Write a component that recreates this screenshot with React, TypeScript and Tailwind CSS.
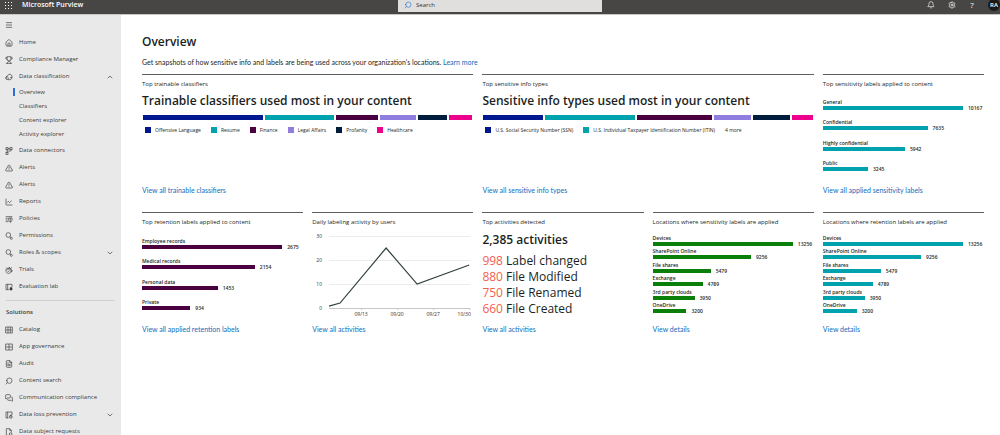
import type { ReactNode } from "react";
import {
  Bell,
  ChartLine,
  ChevronDown,
  ChevronUp,
  FileText,
  House,
  Menu,
  MessagesSquare,
  Search,
  Settings,
  TriangleAlert,
  Trophy,
} from "lucide-react";

const ICON = "h-2 w-2 shrink-0";

function Glyph({ children }: { children: ReactNode }) {
  return (
    <svg
      viewBox="0 0 24 24"
      className={ICON}
      fill="none"
      stroke="currentColor"
      strokeWidth="2"
      aria-hidden="true"
    >
      {children}
    </svg>
  );
}

const ClassificationIcon = () => (
  <Glyph>
    <path d="M3 17V12L12 4h5l4 5v6l-4 5H8" />
    <path d="M3 13c3-3 7-1 7 3s-5 5-7 2z" />
    <path d="M15 14h6" />
  </Glyph>
);

const ConnectorsIcon = () => (
  <Glyph>
    <rect x="3" y="2" width="6" height="6" />
    <rect x="15" y="2" width="6" height="6" />
    <rect x="3" y="16" width="6" height="6" />
    <path d="M6 8v8M9 5h6M18 8v4H6" />
  </Glyph>
);

const PoliciesIcon = () => (
  <Glyph>
    <path d="M2 5h20M2 10h6M2 15h6M2 20h8" />
    <path d="M11 9h10v6c0 3-2 5-5 7-3-2-5-4-5-7zM16 9v12" />
  </Glyph>
);

const PermissionsIcon = () => (
  <Glyph>
    <circle cx="10" cy="9" r="7" />
    <path d="M14 14l3 3" />
    <circle cx="19" cy="19" r="3" />
  </Glyph>
);

const TrialsIcon = () => (
  <Glyph>
    <path d="M3 9h15v7c0 4-3 6-7 6s-8-2-8-6z" />
    <path d="M5 5l5 4 3-6 2 6 6-5M18 12h3v5h-4M7 14l3 3 4-4" />
  </Glyph>
);

const LabIcon = () => (
  <Glyph>
    <path d="M12 20H3V4h18v8M8 4v16" />
    <path d="M15 14h6v7h-6z" fill="currentColor" />
  </Glyph>
);

const GridIcon = () => (
  <Glyph>
    <path d="M2 3h20v18H2zM9 3v18M16 3v18M2 12h20" />
  </Glyph>
);

const AppsIcon = () => (
  <Glyph>
    <path d="M2 3h20v18H2zM12 3v18M2 12h20" />
  </Glyph>
);

const LossIcon = () => (
  <Glyph>
    <path d="M10 21H3V3h18v9M8 3v18" />
    <path d="M14 15h7v6h-7zM16 15v-3h3v3" />
  </Glyph>
);

const RequestIcon = () => (
  <Glyph>
    <path d="M11 22H4V2h10l5 5v6M14 2v5h5" />
    <circle cx="17" cy="18" r="4" />
  </Glyph>
);

type NavEntry = { label: string; icon: ReactNode; chevron?: "up" | "down" };

const NAV_TOP: NavEntry[] = [
  { label: "Home", icon: <House className={ICON} /> },
  { label: "Compliance Manager", icon: <Trophy className={ICON} /> },
  { label: "Data classification", icon: <ClassificationIcon />, chevron: "up" },
];

const NAV_SUB = ["Overview", "Classifiers", "Content explorer", "Activity explorer"];

const NAV_MAIN: NavEntry[] = [
  { label: "Data connectors", icon: <ConnectorsIcon /> },
  { label: "Alerts", icon: <TriangleAlert className={ICON} /> },
  { label: "Alerts", icon: <TriangleAlert className={ICON} /> },
  { label: "Reports", icon: <ChartLine className={ICON} /> },
  { label: "Policies", icon: <PoliciesIcon /> },
  { label: "Permissions", icon: <PermissionsIcon /> },
  { label: "Roles & scopes", icon: <PermissionsIcon />, chevron: "down" },
  { label: "Trials", icon: <TrialsIcon /> },
  { label: "Evaluation lab", icon: <LabIcon /> },
];

const NAV_SOLUTIONS: NavEntry[] = [
  { label: "Catalog", icon: <GridIcon /> },
  { label: "App governance", icon: <AppsIcon /> },
  { label: "Audit", icon: <FileText className={ICON} /> },
  { label: "Content search", icon: <Search className={`${ICON} -scale-x-100`} /> },
  { label: "Communication compliance", icon: <MessagesSquare className={ICON} /> },
  { label: "Data loss prevention", icon: <LossIcon />, chevron: "down" },
  { label: "Data subject requests", icon: <RequestIcon /> },
];

function NavList({ items }: { items: NavEntry[] }) {
  const row = "flex h-[17px] w-full items-center gap-1.5 pr-[7px] pl-[5px] text-left";
  return (
    <ul>
      {items.map((item, i) => (
        <li key={i}>
          {item.chevron ? (
            <button type="button" aria-expanded={item.chevron === "up"} className={row}>
              {item.icon}
              <span className="flex-1">{item.label}</span>
              {item.chevron === "up" ? (
                <ChevronUp className={ICON} />
              ) : (
                <ChevronDown className={ICON} />
              )}
            </button>
          ) : (
            <a href="#" className={row}>
              {item.icon}
              <span>{item.label}</span>
            </a>
          )}
        </li>
      ))}
    </ul>
  );
}

function Sidebar() {
  return (
    <nav
      aria-label="Main"
      className="w-[121px] shrink-0 overflow-hidden bg-[#e9e9e9] text-[6px] whitespace-nowrap text-[#3b3a39]"
    >
      <button type="button" aria-label="Toggle navigation" className="flex h-[19px] items-center pl-[5px]">
        <Menu className={ICON} />
      </button>
      <NavList items={NAV_TOP} />
      <ul>
        {NAV_SUB.map((label, i) => (
          <li key={label}>
            <a
              href="#"
              aria-current={i === 0 ? "page" : undefined}
              className="flex h-3.5 items-center pl-[13px]"
            >
              <span className={i === 0 ? "h-2 w-0.5 bg-[#2a6fd6]" : "h-2 w-0.5"} />
              <span className="pl-1">{label}</span>
            </a>
          </li>
        ))}
      </ul>
      <div className="pt-px">
        <NavList items={NAV_MAIN} />
      </div>
      <hr className="mx-[6px] mt-[5px] border-[#cfcfcf]" />
      <h2 className="mt-[6px] mb-1 pl-[6px] leading-[10px] font-semibold">Solutions</h2>
      <NavList items={NAV_SOLUTIONS} />
    </nav>
  );
}

function Header() {
  return (
    <header className="flex h-[15px] shrink-0 items-start justify-between border-b border-[#c8c6c4] bg-[#484644] text-white">
      <div className="flex h-[10px] flex-1 items-center">
        <button type="button" aria-label="App launcher" className="pl-1">
          <svg viewBox="0 0 9 9" className="h-[9px] w-[9px]" fill="currentColor" aria-hidden="true">
            {[1, 4, 7].map((y) =>
              [1, 4, 7].map((x) => <rect key={`${x}-${y}`} x={x} y={y} width="1" height="1" />),
            )}
          </svg>
        </button>
        <span className="pl-[9px] text-[7px] font-semibold">Microsoft Purview</span>
      </div>
      <label className="flex h-3 w-[204px] items-center gap-1 bg-[#e1dfdd] pb-0.5 pl-1.5">
        <Search className="h-2 w-2 -scale-x-100 text-[#2b7cd3]" />
        <input
          type="search"
          aria-label="Search"
          placeholder="Search"
          className="h-2 min-w-0 flex-1 bg-transparent text-[6px] text-[#323130] outline-none placeholder:text-[#323130]"
        />
      </label>
      <div className="flex h-[10px] flex-1 items-center justify-end gap-[13px]">
        <button type="button" aria-label="Notifications">
          <Bell className="h-2 w-2" />
        </button>
        <button type="button" aria-label="Settings">
          <Settings className="h-2 w-2" />
        </button>
        <button type="button" aria-label="Help" className="w-1.5 text-[8px] leading-[10px]">
          ?
        </button>
        <button
          type="button"
          aria-label="Account"
          className="h-3 w-3 shrink-0 rounded-full bg-[#1b1a19] text-[6px] leading-3 font-semibold"
        >
          RA
        </button>
      </div>
    </header>
  );
}

type CardProps = { label: string; link: string; wide?: boolean; children: ReactNode };

function Card({ label, link, wide, children }: CardProps) {
  return (
    <section
      className={`flex min-w-0 flex-col border-t border-[#605e5c] pt-1 ${wide ? "col-span-2" : ""}`}
    >
      <h3 className="text-[6px] leading-[10px] whitespace-nowrap">{label}</h3>
      {children}
      <a
        href="#"
        className="mt-auto self-start font-['Lato','Open_Sans',sans-serif] text-[7px] leading-[10px] text-[#0f6cbd]"
      >
        {link}
      </a>
    </section>
  );
}

const HEADING = "text-[12px] leading-[14px] font-semibold";

type Segment = { color: string; size: number };

function StackedBar({ segments }: { segments: Segment[] }) {
  return (
    <div className="mt-[7px] flex gap-0.5 px-px">
      {segments.map((s, i) => (
        <div key={i} className={`h-[5px] basis-0 ${s.color}`} style={{ flexGrow: s.size }} />
      ))}
    </div>
  );
}

const COLORS = [
  "bg-[#00188f]",
  "bg-[#00a2ad]",
  "bg-[#4b003f]",
  "bg-[#8f7ee0]",
  "bg-[#001d3d]",
  "bg-[#ec008c]",
];

const CLASSIFIERS = [120, 69, 42, 37, 29, 23].map((size, i) => ({ size, color: COLORS[i] }));
const INFO_TYPES = [60, 90, 75, 37, 37, 21].map((size, i) => ({ size, color: COLORS[i] }));

function Legend({ labels, more }: { labels: string[]; more?: string }) {
  return (
    <ul className="mt-1.5 flex gap-2.5 pl-[3px] text-[5px] leading-2 whitespace-nowrap">
      {labels.map((label, i) => (
        <li key={label} className="flex items-center gap-1">
          <span className={`h-1.5 w-1.5 ${COLORS[i]}`} />
          {label}
        </li>
      ))}
      {more && <li>{more}</li>}
    </ul>
  );
}

type Row = { label: string; value: number; width: number };

const SENSITIVITY: Row[] = [
  { label: "General", value: 10167, width: 87 },
  { label: "Confidential", value: 7635, width: 65 },
  { label: "Highly confidential", value: 5942, width: 51 },
  { label: "Public", value: 3245, width: 28 },
];

const RETENTION: Row[] = [
  { label: "Employee records", value: 2675, width: 87 },
  { label: "Medical records", value: 2154, width: 70 },
  { label: "Personal data", value: 1453, width: 47 },
  { label: "Private", value: 934, width: 30 },
];

const LOCATIONS: Row[] = [
  { label: "Devices", value: 13256, width: 87 },
  { label: "SharePoint Online", value: 9256, width: 61 },
  { label: "File shares", value: 5479, width: 36 },
  { label: "Exchange", value: 4789, width: 31 },
  { label: "3rd party clouds", value: 3950, width: 26 },
  { label: "OneDrive", value: 3200, width: 21 },
];

function BarList({ rows, color, className }: { rows: Row[]; color: string; className: string }) {
  return (
    <ul className={`flex flex-col justify-between text-[5px] font-semibold ${className}`}>
      {rows.map((row) => (
        <li key={row.label}>
          <div className="leading-[7px]">{row.label}</div>
          <div className="flex h-1 items-center gap-[5px]">
            <div className={`h-1 shrink-0 ${color}`} style={{ width: `${row.width}%` }} />
            <span className="leading-1">{row.value}</span>
          </div>
        </li>
      ))}
    </ul>
  );
}

function ActivityChart() {
  return (
    <svg viewBox="0 0 161 90" className="mt-1 w-full" role="img" aria-label="Daily labeling activity by users">
      {[5, 29, 53, 77].map((y, i) => (
        <g key={y}>
          <path d={`M17 ${y}.5H158`} stroke={i === 3 ? "#c8c6c4" : "#edebe9"} />
          <text x="10" y={y + 2} fontSize="5" textAnchor="end" fill="#323130">
            {30 - i * 10}
          </text>
        </g>
      ))}
      <path d="M49.5 77v2M85.5 77v2M121.5 77v2M157.5 77v2" stroke="#c8c6c4" />
      <polyline points="17,75 28,72 74,17 105,53 157,34" fill="none" stroke="#33423d" strokeWidth="1.2" />
      <g fontSize="5" textAnchor="middle" fill="#323130">
        <text x="49" y="85">09/13</text>
        <text x="85" y="85">09/20</text>
        <text x="121" y="85">09/27</text>
        <text x="152" y="85">10/30</text>
      </g>
    </svg>
  );
}

const ACTIVITIES = [
  { count: 998, label: "Label changed" },
  { count: 880, label: "File Modified" },
  { count: 750, label: "File Renamed" },
  { count: 660, label: "File Created" },
];

export default function App() {
  return (
    <div className="flex h-screen flex-col overflow-hidden bg-white font-['Open_Sans','Noto_Sans',sans-serif] text-[#201f1e]">
      <Header />
      <div className="flex min-h-0 flex-1">
        <Sidebar />
        <main className="min-w-0 flex-1 overflow-hidden pt-5 pr-4 pl-[21px]">
          <h1 className={HEADING}>Overview</h1>
          <p className="mt-2 font-['Lato','Open_Sans',sans-serif] text-[7px] leading-[10px]">
            Get snapshots of how sensitive info and labels are being used across your
            organization's locations.{" "}
            <a href="#" className="text-[#0f6cbd]">
              Learn more
            </a>
          </p>

          <div className="mt-[7px] grid grid-cols-5 gap-x-[9px] gap-y-[17px]">
            <Card wide label="Top trainable classifiers" link="View all trainable classifiers">
              <h2 className={`mt-[5px] ${HEADING}`}>
                Trainable classifiers used most in your content
              </h2>
              <StackedBar segments={CLASSIFIERS} />
              <Legend
                labels={["Offensive Language", "Resume", "Finance", "Legal Affairs", "Profanity", "Healthcare"]}
              />
            </Card>
            <Card wide label="Top sensitive info types" link="View all sensitive info types">
              <h2 className={`mt-[5px] ${HEADING}`}>
                Sensitive info types used most in your content
              </h2>
              <StackedBar segments={INFO_TYPES} />
              <Legend
                labels={[
                  "U.S. Social Security Number (SSN)",
                  "U.S. Individual Taxpayer Identification Number (ITIN)",
                ]}
                more="4 more"
              />
            </Card>
            <Card label="Top sensitivity labels applied to content" link="View all applied sensitivity labels">
              <BarList rows={SENSITIVITY} color="bg-[#00a2ad]" className="mt-2.5 mb-3.5 h-[72px]" />
            </Card>

            {/* Second row */}
            <Card label="Top retention labels applied to content" link="View all applied retention labels">
              <BarList rows={RETENTION} color="bg-[#4b003f]" className="mt-[11px] mb-3.5 h-[72px]" />
            </Card>
            <Card label="Daily labeling activity by users" link="View all activities">
              <ActivityChart />
            </Card>
            <Card label="Top activities detected" link="View all activities">
              <h2 className={`mt-1.5 ${HEADING}`}>2,385 activities</h2>
              <ul className="mt-1.5 text-[12px] leading-4">
                {ACTIVITIES.map((a) => (
                  <li key={a.label}>
                    <span className="text-[#f4604f]">{a.count}</span> {a.label}
                  </li>
                ))}
              </ul>
            </Card>
            <Card label="Locations where sensitivity labels are applied" link="View details">
              <BarList rows={LOCATIONS} color="bg-[#0a800a]" className="mt-2 h-[78px]" />
            </Card>
            <Card label="Locations where retention labels are applied" link="View details">
              <BarList rows={LOCATIONS} color="bg-[#00a2ad]" className="mt-2 h-[78px]" />
            </Card>
          </div>
        </main>
      </div>
    </div>
  );
}
